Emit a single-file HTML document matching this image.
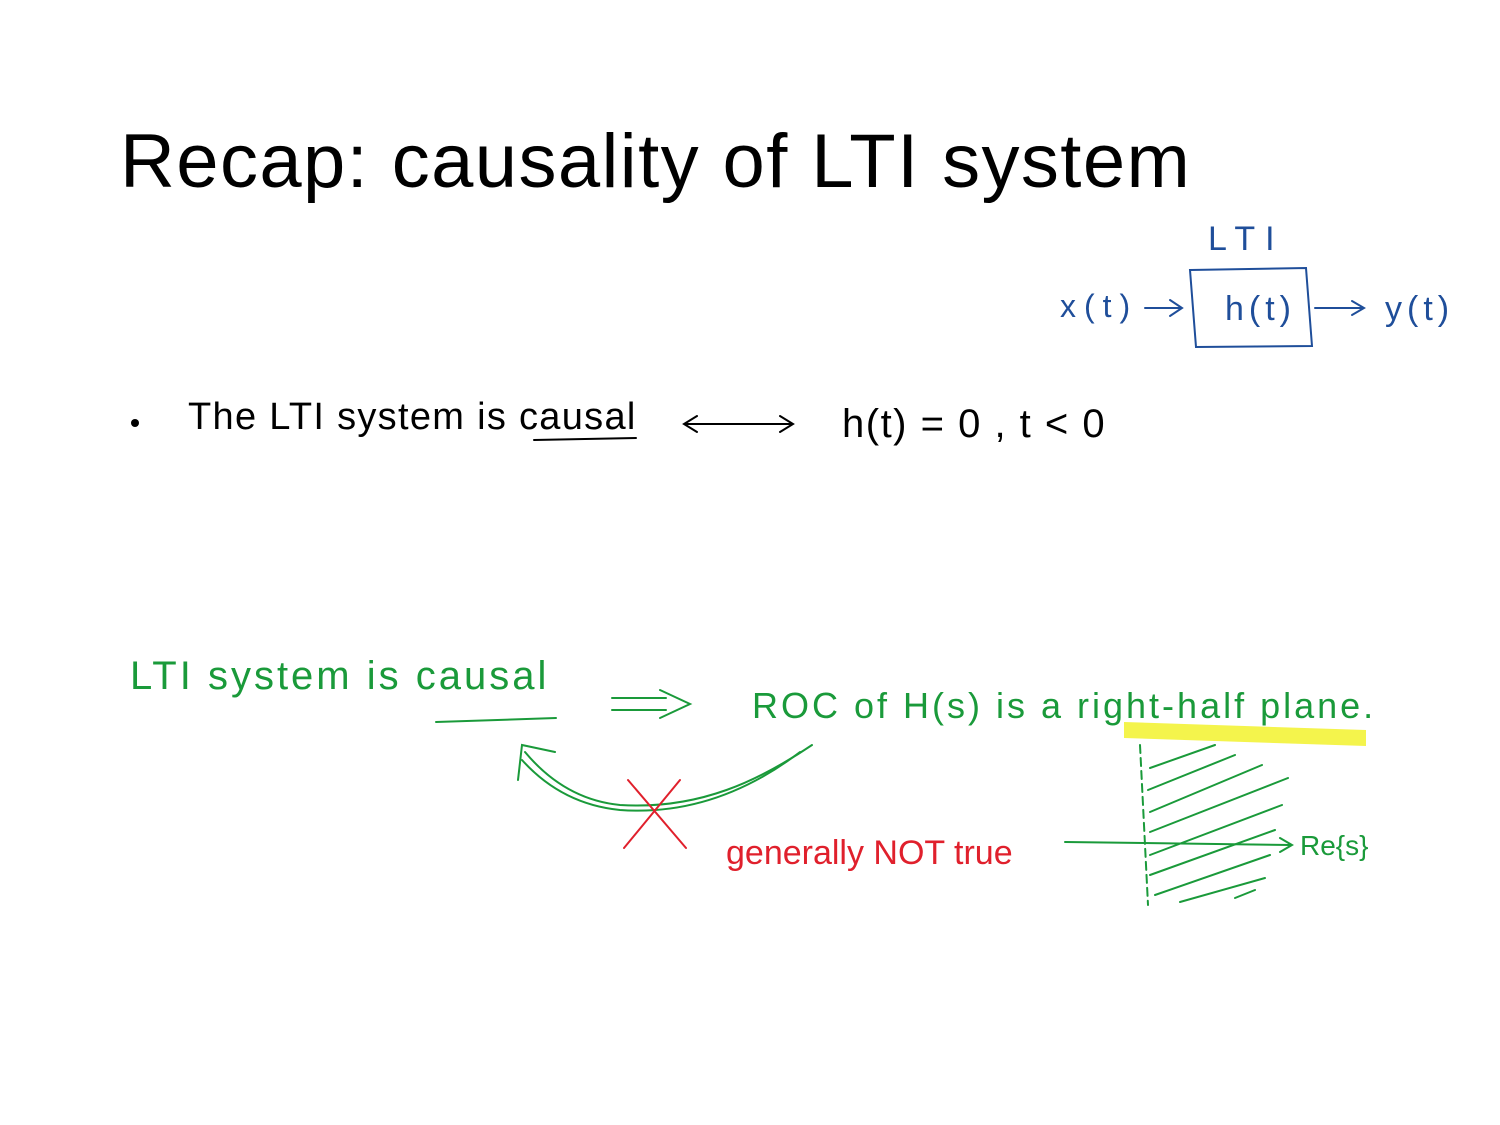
<!DOCTYPE html>
<html><head><meta charset="utf-8"><style>
body{margin:0;width:1500px;height:1125px;background:#fff;position:relative;overflow:hidden;font-family:"Liberation Sans",sans-serif}
.t{position:absolute;white-space:nowrap;line-height:1}
.hw{font-family:"Liberation Sans Narrow","Liberation Sans",sans-serif;font-weight:normal}
</style></head><body>
<div class="t" style="left:120px;top:124px;font-size:76px;color:#000;letter-spacing:1.4px">Recap: causality of LTI system</div>

<svg width="1500" height="1125" style="position:absolute;left:0;top:0" fill="none" stroke-linecap="round">
<g stroke="#1f4e9a" stroke-width="2">
<path d="M1190 270 L1306 268 L1312 346 L1196 347 Z"/>
<path d="M1145 308 L1180 308 M1170 300 L1182 308 L1170 316"/>
<path d="M1315 308 L1362 308 M1352 301 L1364 308 L1352 315"/>
</g>
<circle cx="135" cy="423" r="4" fill="#000"/>
<g stroke="#000" stroke-width="2">
<path d="M534 440 L636 438"/>
<path d="M685 424 L792 424 M780 416 L793 424 L780 432 M697 416 L684 424 L697 432"/>
</g>
<path d="M1124 722 L1366 730 L1366 746 L1124 738 Z" fill="#f0f000" opacity="0.7" stroke="none"/>
<g stroke="#1a9a3a" stroke-width="2">
<path d="M436 722 L556 718"/>
<path d="M612 698 L666 698 M612 710 L666 710 M660 690 L690 704 L660 718"/>
<path d="M812 745 C760 780 700 810 620 805 C570 800 540 770 525 752"/>
<path d="M800 752 C750 790 690 815 620 810 C570 805 540 780 522 760"/>
<path d="M518 780 L522 745 L555 752"/>
<path d="M1140 745 L1148 905" stroke-dasharray="8 5"/>
<path d="M1065 842 L1290 845 M1280 838 L1292 845 L1280 852"/>
<path d="M1150 768 L1215 745 M1148 790 L1235 755 M1150 812 L1262 765 M1150 832 L1288 778 M1150 855 L1282 805 M1150 875 L1275 830 M1155 895 L1270 855 M1180 902 L1265 878 M1235 898 L1255 890"/>
</g>
<g stroke="#e0202c" stroke-width="2">
<path d="M628 780 L686 848 M680 780 L624 848"/>
</g>
</svg>

<div class="t hw" style="left:1208px;top:222px;font-size:34px;color:#1f4e9a;letter-spacing:10px">LTI</div>
<div class="t hw" style="left:1060px;top:290px;font-size:32px;color:#1f4e9a;letter-spacing:8px">x(t)</div>
<div class="t hw" style="left:1225px;top:292px;font-size:34px;color:#1f4e9a;letter-spacing:5px">h(t)</div>
<div class="t hw" style="left:1385px;top:292px;font-size:34px;color:#1f4e9a;letter-spacing:5px">y(t)</div>

<div class="t hw" style="left:188px;top:398px;font-size:38px;color:#000;letter-spacing:1.3px">The LTI system is causal</div>
<div class="t hw" style="left:842px;top:404px;font-size:40px;color:#000;letter-spacing:1.5px">h(t) = 0 , t &lt; 0</div>

<div class="t hw" style="left:130px;top:656px;font-size:40px;color:#1a9a3a;letter-spacing:3px">LTI system is causal</div>
<div class="t hw" style="left:752px;top:688px;font-size:36px;color:#1a9a3a;letter-spacing:3px">ROC of H(s) is a right-half plane.</div>
<div class="t hw" style="left:1300px;top:832px;font-size:28px;color:#1a9a3a">Re{s}</div>
<div class="t hw" style="left:726px;top:836px;font-size:34px;color:#e0202c">generally NOT true</div>
</body></html>
